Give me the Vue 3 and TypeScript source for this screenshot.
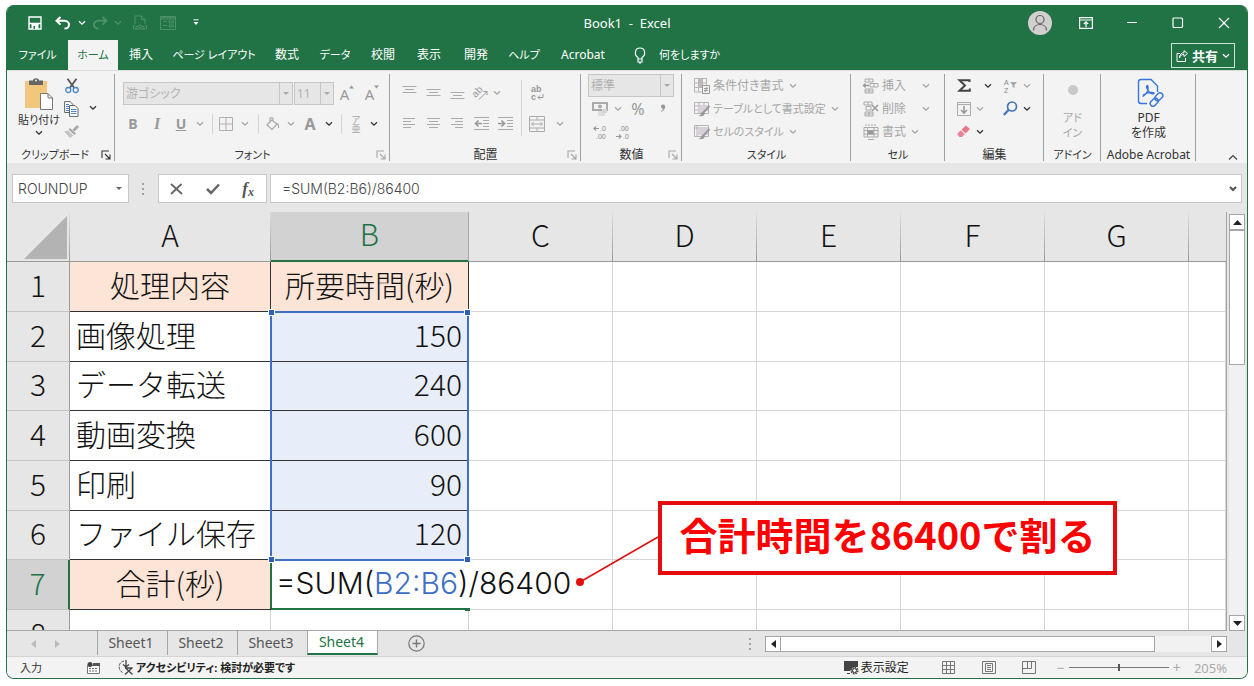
<script setup lang="ts">
import { h, ref } from 'vue'

interface Row {
  n: number
  label: string
  value: string
  head?: boolean
}

const tabs = [
  { name: 'ファイル', kana: true },
  { name: 'ホーム', kana: true },
  { name: '挿入', kana: false },
  { name: 'ページ レイアウト', kana: true },
  { name: '数式', kana: false },
  { name: 'データ', kana: true },
  { name: '校閲', kana: false },
  { name: '表示', kana: false },
  { name: '開発', kana: false },
  { name: 'ヘルプ', kana: true },
  { name: 'Acrobat', kana: false },
]
const activeTab = ref('ホーム')

const columns = ['A', 'B', 'C', 'D', 'E', 'F', 'G', '']
const rows: Row[] = [
  { n: 1, label: '処理内容', value: '所要時間(秒)', head: true },
  { n: 2, label: '画像処理', value: '150' },
  { n: 3, label: 'データ転送', value: '240' },
  { n: 4, label: '動画変換', value: '600' },
  { n: 5, label: '印刷', value: '90' },
  { n: 6, label: 'ファイル保存', value: '120' },
  { n: 7, label: '合計(秒)', value: '', head: true },
  { n: 8, label: '', value: '' },
]

const sheets = ['Sheet1', 'Sheet2', 'Sheet3', 'Sheet4']
const activeSheet = ref('Sheet4')
const cellName = ref('ROUNDUP')
const formula = ref('=SUM(B2:B6)/86400')
const zoom = ref(205)

const Chev = () =>
  h('svg', { width: 8, height: 6, viewBox: '0 0 8 6' }, [
    h('path', { d: 'M1 1.2 4 4.2 7 1.2', fill: 'none', stroke: 'currentColor', 'stroke-width': 1.3 }),
  ])

const Launcher = () =>
  h('svg', { width: 10, height: 10, viewBox: '0 0 10 10' }, [
    h('path', { d: 'M1 8V1H8M4 4 8.500 8.500M9 4.500V9H4.500', fill: 'none', stroke: 'currentColor', 'stroke-width': 1.100 }),
  ])
</script>

<template>
  <div class="window">
    <header class="title">
      <div class="quick">
        <button aria-label="上書き保存"><svg width="14" height="14" viewBox="0 0 14 14"><path d="M1 1H13V13H1Z M1 7.500H13" fill="none" stroke="#fff" stroke-width="1.400" /><path d="M3.500 7.500H10.500V13H3.500Z" fill="#fff" /><path d="M5.500 10H7V13H5.500Z" fill="#217346" /></svg></button>
        <button aria-label="元に戻す"><svg width="16" height="14" viewBox="0 0 16 14"><path d="M5.500 1 1.500 4.800 5.500 8.600M2 4.800H9.500C16 5 15 12.500 9.500 12.500" fill="none" stroke="#fff" stroke-width="2" /></svg></button>
        <button aria-label="元に戻す一覧"><Chev /></button>
        <button class="dim" disabled aria-label="やり直し"><svg width="16" height="14" viewBox="0 0 16 14"><path d="M10.500 1 14.500 4.800 10.500 8.600M14 4.800H6.500C0 5 1 12.500 6.500 12.500" fill="none" stroke="currentColor" stroke-width="2" /></svg></button>
        <button class="dim" disabled aria-label="やり直し一覧"><Chev /></button>
        <button class="dim" disabled aria-label="印刷プレビュー"><svg width="14" height="15" viewBox="0 0 14 15"><path d="M2 9V1H8.500L12 4.500V9M8.500 1V4.500H12M.5 10V14H13.500V10M3 11.500H5M9 11.500H11M3 14V11M11 14V11" fill="none" stroke="currentColor" /><circle cx="7" cy="11.500" r="1.500" fill="none" stroke="currentColor" /></svg></button>
        <button class="dim" disabled aria-label="フォーム"><svg width="16" height="14" viewBox="0 0 16 14"><path d="M.5.5H15.500V13.500H.5ZM.5 3H15.500M.5 1.800H15.500M3 5.500H7M3 9.500H7M9 5H13.500V7H9ZM9 9H13.500V11H9Z" fill="none" stroke="currentColor" /></svg></button>
        <button aria-label="クイック アクセスのカスタマイズ"><svg width="6" height="7" viewBox="0 0 6 7"><path d="M.5.8H5.500" stroke="#fff" /><path d="M.5 3H5.500L3 6Z" fill="#fff" /></svg></button>
      </div>
      <h1>Book1&nbsp; -&nbsp; Excel</h1>
      <div class="winctl">
        <button aria-label="アカウント"><svg width="24" height="24" viewBox="0 0 24 24"><circle cx="12" cy="12" r="12" fill="#d2d0ce" /><circle cx="12" cy="8.500" r="4" fill="none" stroke="#666" stroke-width="1.200" /><path d="M5.500 19.500C5.500 11.500 18.500 11.500 18.500 19.500" fill="none" stroke="#666" stroke-width="1.200" /></svg></button>
        <button aria-label="リボンの表示オプション"><svg width="14" height="12" viewBox="0 0 14 12"><path d="M.6.6H13.400V11.400H.6ZM.6 3H13.400M7 10V5M4.800 7 7 4.800 9.200 7" fill="none" stroke="#fff" stroke-width="1.200" /></svg></button>
        <button aria-label="最小化"><svg width="12" height="12" viewBox="0 0 12 12"><path d="M1 5.500H11" stroke="#fff" /></svg></button>
        <button aria-label="最大化"><svg width="12" height="12" viewBox="0 0 12 12"><rect x="1" y="1" width="9.500" height="9.500" rx="1" fill="none" stroke="#fff" stroke-width="1.200" /></svg></button>
        <button aria-label="閉じる"><svg width="12" height="12" viewBox="0 0 12 12"><path d="M1 1 11 11M11 1 1 11" stroke="#fff" stroke-width="1.200" /></svg></button>
      </div>
    </header>

    <nav class="tabs">
      <button v-for="t in tabs" :key="t.name" :class="{ on: t.name === activeTab, kana: t.kana }" @click="activeTab = t.name">{{ t.name }}</button>
      <button class="tell kana">
        <svg width="12" height="17" viewBox="0 0 12 17"><path d="M4 12V10.500C0 8 .5 1 6 1S12 8 8 10.500V12ZM4 12V15H8V12M5 16H7" fill="none" stroke="#fff" stroke-width="1.200" /></svg>
        何をしますか
      </button>
      <button class="share">
        <svg width="12" height="12" viewBox="0 0 12 12"><path d="M4 3.500H1V11.500H9.500V8M3.500 8C4 5 6 4.500 8 4.500V6.500L11.500 3.500 8 .7V2.700C5.500 2.700 3.500 4.500 3.500 8Z" fill="none" stroke="#fff" /></svg>
        <b>共有</b><Chev />
      </button>
    </nav>

    <section class="ribbon">
      <div class="group clip">
        <div class="body">
          <button class="paste">
            <svg width="30" height="32" viewBox="0 0 30 32"><path d="M1 3H23V30H1Z" fill="#f0c77c" /><path d="M5 2.500H9C9-.5 15-.5 15 2.500H19V7H5Z" fill="#666" /><circle cx="12" cy="2.500" r="1" fill="#eee" /><path d="M16.500 15.500H24L28.500 20V31.500H16.500ZM24 15.500V20H28.500" fill="#fff" stroke="#777" /></svg>
            <span class="kana">貼り付け</span>
            <Chev />
          </button>
          <div class="clipcol">
            <button aria-label="切り取り"><svg width="14" height="16" viewBox="0 0 14 16"><path d="M2.500.8 9.300 10M11.500.8 4.700 10" stroke="#555" stroke-width="1.800" /><circle cx="3.300" cy="12" r="2.500" fill="none" stroke="#4a86c5" stroke-width="1.300" /><circle cx="10.700" cy="12" r="2.500" fill="none" stroke="#4a86c5" stroke-width="1.300" /></svg></button>
            <button aria-label="コピー"><svg width="15" height="16" viewBox="0 0 15 16"><path d="M.6.6H6L9 3.500V11.500H.6Z" fill="#fff" stroke="#666" /><path d="M2 3.500H5M2 5.500H5M2 7.500H5M2 9.500H5" stroke="#4a86c5" /><path d="M5.500 4.500H11L14 7.500V15.400H5.500Z" fill="#fff" stroke="#666" /><path d="M7 8.500H12.500M7 10.500H12.500M7 12.500H12.500" stroke="#4a86c5" /></svg></button>
            <button disabled aria-label="書式のコピー"><svg width="15" height="13" viewBox="0 0 15 13"><path d="M13 0 15 2 10.500 6.500 8.500 4.500ZM6 3 12 8.500 10.500 10 4.500 4.500Z" fill="#a9a9a9" /><path d="M0 6.500 4 5.500 9.500 10.500 6 13Z" fill="#c9c5c5" /></svg></button>
          </div>
          <button class="copymore" aria-label="コピー オプション"><Chev /></button>
        </div>
        <footer><span class="kana">クリップボード</span><Launcher /></footer>
      </div>

      <div class="group font off">
        <div class="body">
          <div class="fontrow">
            <span class="combo"><select disabled aria-label="フォント"><option>游ゴシック</option></select><i></i></span>
            <span class="combo"><select disabled aria-label="フォント サイズ"><option>11</option></select><i></i></span>
            <button disabled aria-label="フォント サイズの拡大" class="grow">A<svg width="5" height="4" viewBox="0 0 5 4"><path d="M0 3.500 2.500 .5 5 3.500Z" fill="currentColor" /></svg></button>
            <button disabled aria-label="フォント サイズの縮小" class="grow">A<svg width="5" height="4" viewBox="0 0 5 4"><path d="M0 .5H5L2.500 3.500Z" fill="currentColor" /></svg></button>
          </div>
          <div class="fmtrow">
            <button disabled><b>B</b></button>
            <button disabled><b class="it">I</b></button>
            <button disabled><b class="ul">U</b></button>
            <Chev />
            <span class="vr"></span>
            <button disabled aria-label="罫線"><svg width="14" height="14" viewBox="0 0 14 14"><path d="M.5.5H13.500V13.500H.5ZM7 .5V13.500M.5 7H13.500" fill="none" stroke="#b3adad" /></svg></button>
            <Chev />
            <span class="vr"></span>
            <button disabled aria-label="塗りつぶし"><svg width="14" height="14" viewBox="0 0 14 14"><path d="M5.500 3 11 7 6 12.500 1 8ZM4 6V1.500C4 .5 7 .5 7 1.500V5M10.500 6C12.500 7 13 8 12.500 11" fill="none" stroke="#aaa" stroke-width="1.200" /></svg></button>
            <Chev />
            <button disabled class="bigA"><b>A</b></button>
            <Chev class="dark" />
            <span class="vr"></span>
            <button disabled class="ruby"><span>ア</span><span>亜</span></button>
            <Chev class="dark" />
          </div>
        </div>
        <footer><span class="kana">フォント</span><Launcher /></footer>
      </div>

      <div class="group align off">
        <div class="body">
          <div class="algrid">
            <button disabled aria-label="上揃え"><svg width="15" height="17" viewBox="0 0 15 17"><path d="M.5 2.500H14.500M3 5.500H12M.5 8.500H14.500" stroke="#aaa" /></svg></button>
            <button disabled aria-label="上下中央揃え"><svg width="15" height="17" viewBox="0 0 15 17"><path d="M.5 5.500H14.500M3 8.500H12M.5 11.500H14.500" stroke="#aaa" /></svg></button>
            <button disabled aria-label="下揃え"><svg width="15" height="17" viewBox="0 0 15 17"><path d="M.5 8.500H14.500M3 11.500H12M.5 14.500H14.500" stroke="#aaa" /></svg></button>
            <button disabled aria-label="方向"><svg width="16" height="16" viewBox="0 0 16 16"><text x="0" y="9" transform="rotate(-45 6 8)" font-size="10" fill="#999">ab</text><path d="M6 14.500 14 6.500M14 10V6.500H10.500" fill="none" stroke="#999" /></svg></button>
            <Chev class="near" />
            <button disabled aria-label="左揃え"><svg width="12" height="11" viewBox="0 0 12 11"><path d="M0 .5H12M0 3.500H8M0 6.500H12M0 9.500H8" stroke="#aaa" /></svg></button>
            <button disabled aria-label="中央揃え"><svg width="13" height="11" viewBox="0 0 13 11"><path d="M0 .5H13M2 3.500H11M0 6.500H13M2 9.500H11" stroke="#aaa" /></svg></button>
            <button disabled aria-label="右揃え"><svg width="12" height="11" viewBox="0 0 12 11"><path d="M0 .5H12M4 3.500H12M0 6.500H12M4 9.500H12" stroke="#aaa" /></svg></button>
            <button disabled aria-label="インデントを減らす"><svg width="15" height="13" viewBox="0 0 15 13"><path d="M0 .5H15M9 3.500H15M9 6.500H15M9 9.500H15M0 12.500H15" stroke="#aaa" /><path d="M8 6.500H1.500M4.500 3.500 1.500 6.500 4.500 9.500" fill="none" stroke="#999" stroke-width="1.600" /></svg></button>
            <button disabled aria-label="インデントを増やす"><svg width="15" height="13" viewBox="0 0 15 13"><path d="M0 .5H15M9 3.500H15M9 6.500H15M9 9.500H15M0 12.500H15" stroke="#aaa" /><path d="M0 6.500H6.500M3.500 3.500 6.500 6.500 3.500 9.500" fill="none" stroke="#999" stroke-width="1.600" /></svg></button>
          </div>
          <span class="vr tall"></span>
          <div class="wrapgrid">
            <button disabled aria-label="折り返して全体を表示する"><svg width="14" height="18" viewBox="0 0 14 18"><text x="1" y="8" font-size="9" font-weight="700" fill="#999">ab</text><text x="1" y="16" font-size="9" font-weight="700" fill="#999">c</text><path d="M13 10V13.500H8M10 11.500 8 13.500 10 15.500" fill="none" stroke="#999" /></svg></button>
            <span></span>
            <button disabled aria-label="セルを結合して中央揃え"><svg width="16" height="16" viewBox="0 0 16 16"><path d="M.5.5H15.500V15.500H.5ZM.5 4H15.500M.5 12H15.500M8 .5V4M8 12V15.500M2.500 8H13.500M4.500 6 2.500 8 4.500 10M11.500 6 13.500 8 11.500 10" fill="none" stroke="#aaa" /></svg></button>
            <Chev />
          </div>
        </div>
        <footer><span>配置</span><Launcher /></footer>
      </div>

      <div class="group number off">
        <div class="body">
          <span class="combo"><select disabled aria-label="表示形式"><option>標準</option></select><i></i></span>
          <div class="numrow">
            <button disabled aria-label="通貨表示形式"><svg width="16" height="14" viewBox="0 0 16 14"><path d="M1 1H15V8H1Z" fill="none" stroke="#aaa" stroke-width="2" /><circle cx="8" cy="4.500" r="2" fill="#aaa" /><path d="M6 9H13V14H6Z" fill="#ddd" /><path d="M10 7H15V11H10Z" fill="#d4d4d4" /></svg></button>
            <Chev />
            <button disabled class="pct">%</button>
            <button disabled aria-label="桁区切りスタイル"><svg width="6" height="9" viewBox="0 0 6 9"><path d="M3 .5C6 .5 6.500 5 1.500 8L1 7.300C2.500 6.300 3 5.500 3 4.700 .3 4.700 .3 .5 3 .5Z" fill="#999" /></svg></button>
          </div>
          <div class="numrow">
            <button disabled aria-label="小数点以下の表示桁数を増やす"><svg width="14" height="16" viewBox="0 0 14 16"><text x="7" y="7" font-size="7" fill="#888">.0</text><text x="3" y="15" font-size="7" fill="#888">.00</text><path d="M6 4.500H1M3 2.500 1 4.500 3 6.500" fill="none" stroke="#999" stroke-width="1.200" /></svg></button>
            <span class="dec"><button disabled aria-label="小数点以下の表示桁数を減らす"><svg width="14" height="16" viewBox="0 0 14 16"><text x="3" y="7" font-size="7" fill="#888">.00</text><text x="7" y="15" font-size="7" fill="#888">.0</text><path d="M0 12.500H5M3 10.500 5 12.500 3 14.500" fill="none" stroke="#999" stroke-width="1.200" /></svg></button></span>
          </div>
        </div>
        <footer><span>数値</span><Launcher /></footer>
      </div>

      <div class="group styles off">
        <div class="body">
          <button disabled class="line"><svg width="16" height="16" viewBox="0 0 16 16"><path d="M.5.5H12.500V14H.5ZM.5 5H12.500M.5 9.500H12.500M4.500.5V14M8.500.5V14" fill="none" stroke="#b5b5b5" /><path d="M4.500.5H8.500V9.500H4.500Z" fill="#c0b8bc" /><path d="M8.500 7.500H15.500V15.500H8.500Z" fill="#f3f3f3" stroke="#999" /><path d="M10 10.500H14M10 12.500H14M13 9 11 14" stroke="#999" /></svg><span>条件付き書式</span><Chev /></button>
          <button disabled class="line kana"><svg width="16" height="16" viewBox="0 0 16 16"><path d="M.5 1.500H14.500V12.500H.5ZM.5 5H14.500M.5 9H14.500M5 1.500V12.500M10 1.500V12.500" fill="none" stroke="#b5b5b5" /><path d="M5 5H14V9H9V12H5Z" fill="#d9d0da" /><path d="M15.500 5 9 12" stroke="#999" stroke-width="2" /><path d="M9 11C6 11 8 14 4.500 15 9 16 11 14 10.500 12Z" fill="#999" /></svg><span>テーブルとして書式設定</span><Chev /></button>
          <button disabled class="line kana"><svg width="16" height="16" viewBox="0 0 16 16"><path d="M.5 1.500H14.500V12.500H.5ZM.5 4H14.500M3 1.500V12.500" fill="none" stroke="#b5b5b5" /><path d="M4 5H14V11H4Z" fill="#d9d0da" /><path d="M15.500 5 9 12" stroke="#999" stroke-width="2" /><path d="M9 11C6 11 8 14 4.500 15 9 16 11 14 10.500 12Z" fill="#999" /></svg><span>セルのスタイル</span><Chev /></button>
        </div>
        <footer><span class="kana">スタイル</span></footer>
      </div>

      <div class="group cells off">
        <div class="body">
          <button disabled class="line wide"><svg width="16" height="16" viewBox="0 0 16 16"><path d="M2 1H10V4H2ZM6 1V4M2 11H10V15H2ZM6 11V15M2 13H10M7 5.500H15V9H7ZM11 5.500V9" fill="none" stroke="#aaa" /><path d="M6 7.500H0M2.500 5.500 .5 7.500 2.500 9.500" fill="none" stroke="#999" stroke-width="1.300" /></svg><span>挿入</span><Chev /></button>
          <button disabled class="line wide"><svg width="16" height="16" viewBox="0 0 16 16"><path d="M1 1H9V4H1ZM5 1V4M3 5.500H8V9H3ZM2 11H10V15H2ZM6 11V15M2 13H10" fill="none" stroke="#aaa" /><path d="M9 4 15 10M15 4 9 10" stroke="#999" stroke-width="1.500" /></svg><span>削除</span><Chev /></button>
          <button disabled class="line"><svg width="16" height="16" viewBox="0 0 16 16"><path d="M1 3.500H15V13H1ZM4.500 3.500V13M11 3.500V13M1 6.500H15M1 10H15M5 15.500H11" fill="none" stroke="#aaa" /><path d="M2 1H14" stroke="#aaa" stroke-dasharray="2 1" /><path d="M5 6.500H10.500V10.500H5Z" fill="#999" /></svg><span>書式</span><Chev /></button>
        </div>
        <footer><span class="kana">セル</span></footer>
      </div>

      <div class="group editing">
        <div class="body">
          <button aria-label="オート SUM"><svg width="13" height="13" viewBox="0 0 13 13"><path d="M11.500 3V1.200H1.500L7 6.500 1.500 11.800H11.800V9.500" fill="none" stroke="#444" stroke-width="2" /></svg></button>
          <Chev class="dark c2" />
          <button disabled aria-label="並べ替えとフィルター"><svg width="15" height="16" viewBox="0 0 15 16"><text x="1" y="7" font-size="7" fill="#888">A</text><text x="1" y="15" font-size="7" fill="#888">Z</text><path d="M7 4H14L11.500 7V10L9.500 9V7Z" fill="#aaa" /></svg></button>
          <Chev />
          <button disabled aria-label="フィル"><svg width="14" height="14" viewBox="0 0 14 14"><path d="M.5.5H13.500V13.500H.5ZM.5 2.500H13.500" fill="none" stroke="#aaa" /><path d="M7 4V11M4 8 7 11 10 8" fill="none" stroke="#999" stroke-width="1.600" /></svg></button>
          <Chev />
          <button aria-label="検索と選択"><svg width="15" height="15" viewBox="0 0 15 15"><circle cx="9" cy="5.500" r="4.500" fill="none" stroke="#3f77b8" stroke-width="1.700" /><path d="M5.500 9 .8 14" stroke="#3f77b8" stroke-width="2.200" /></svg></button>
          <Chev class="dark" />
          <button aria-label="クリア"><svg width="14" height="13" viewBox="0 0 14 13"><path d="M9 .5 13 4 8.500 8.500 4.500 4.500Z" fill="#e8788c" /><path d="M3.800 5.300 7.800 9.300 5 12H2.500L.5 9.500V8.500Z" fill="#ea8497" /></svg></button>
          <Chev class="dark" />
        </div>
        <footer><span>編集</span></footer>
      </div>

      <div class="group addin off">
        <div class="body">
          <button disabled class="big kana"><svg width="28" height="36" viewBox="0 0 28 36"><circle cx="14" cy="16" r="5" fill="#c8c8c8" /></svg><span>アド</span><span>イン</span></button>
        </div>
        <footer><span class="kana">アドイン</span></footer>
      </div>

      <div class="group acro">
        <div class="body">
          <button class="big"><svg width="28" height="36" viewBox="0 0 28 36"><g fill="none" stroke="#3b74dc" stroke-width="1.400"><path d="M12 29.500H6C4.500 29.500 3.500 28.500 3.500 27V8C3.500 6.500 4.500 5.500 6 5.500H16L22.500 12V18M7.500 22.500C11 21 14 16 13 12.500 12.300 10.500 10.800 12 12 14.500 13.500 18 16 20.500 19 19.500 19.500 18 14 17.500 8 21" /><rect x="19.500" y="20" width="9" height="5.500" rx="2.700" transform="rotate(-45 24 23)" /><rect x="14.500" y="25.500" width="9" height="5.500" rx="2.700" transform="rotate(-45 19 28)" /></g></svg><span>PDF</span><span>を作成</span></button>
        </div>
        <footer><span>Adobe Acrobat</span></footer>
      </div>
      <button class="collapse" aria-label="リボンを折りたたむ"><svg width="10" height="7" viewBox="0 0 10 7"><path d="M1 5.500 5 1.500 9 5.500" fill="none" stroke="#444" stroke-width="1.200" /></svg></button>
    </section>

    <section class="fbar">
      <label class="namebox"><input v-model="cellName" aria-label="名前ボックス" /><i class="tri"></i></label>
      <span class="dots"><i></i><i></i><i></i></span>
      <div class="fbtns">
        <button aria-label="キャンセル"><svg width="13" height="12" viewBox="0 0 13 12"><path d="M1 1 12 11M11.500 1 1 11" stroke="#666" stroke-width="1.800" /></svg></button>
        <button aria-label="入力"><svg width="14" height="12" viewBox="0 0 14 12"><path d="M1 6 5 10 13 1.500" fill="none" stroke="#666" stroke-width="2.500" /></svg></button>
        <button class="fx" aria-label="関数の挿入">f<small>x</small></button>
      </div>
      <label class="formula"><input v-model="formula" aria-label="数式バー" /><svg width="8" height="6" viewBox="0 0 8 6"><path d="M1 1 4 4 7 1" fill="none" stroke="#555" stroke-width="2" /></svg></label>
    </section>

    <main class="area">
      <div class="sheet">
        <table>
          <colgroup><col class="wr" /><col class="wa" /><col class="wb" /><col v-for="i in 5" :key="i" class="wc" /><col /></colgroup>
          <thead>
            <tr>
              <th class="corner"><svg width="43" height="43" viewBox="0 0 43 43"><path d="M43 0V43H0Z" fill="#b3b3b3" /></svg></th>
              <th v-for="c in columns" :key="c" :class="{ sel: c === 'B' }">{{ c }}</th>
            </tr>
          </thead>
          <tbody>
            <tr v-for="r in rows" :key="r.n">
              <th :class="{ sel: r.n === 7 }">{{ r.n }}</th>
              <td :class="{ boxed: r.n < 8, head: r.head }">{{ r.label }}</td>
              <td :class="{ boxed: r.n < 7, head: r.n === 1, num: r.n > 1 && r.n < 7, edit: r.n === 7 }">
                {{ r.value }}
                <span v-if="r.n === 2" class="range"><i></i><i></i><i></i><i></i></span>
                <div v-if="r.n === 7" class="editor" role="textbox" aria-label="B7" contenteditable="true">=SUM(<span class="refr">B2:B6</span>)/86400</div>
                <i v-if="r.n === 7" class="handle"></i>
              </td>
              <td v-for="i in 6" :key="i"></td>
            </tr>
          </tbody>
        </table>
        <svg class="leader" width="90" height="60" viewBox="0 0 90 60"><path d="M10 50 88 5" stroke="#e01010" stroke-width="1.500" /><circle cx="10" cy="50" r="4" fill="#e01010" /></svg>
        <div class="callout">合計時間を86400で割る</div>
      </div>
      <div class="vscroll">
        <button aria-label="上へ"><svg width="9" height="5" viewBox="0 0 9 5"><path d="M0 5 4.500 0 9 5Z" fill="#222" /></svg></button>
        <div class="vtrack"><div class="vthumb"></div></div>
        <button aria-label="下へ"><svg width="9" height="5" viewBox="0 0 9 5"><path d="M0 0H9L4.500 5Z" fill="#222" /></svg></button>
      </div>
    </main>

    <section class="sheetbar">
      <div class="nav">
        <button disabled aria-label="前のシート"><svg width="5" height="8" viewBox="0 0 5 8"><path d="M5 0V8L0 4Z" fill="#bbb" /></svg></button>
        <button disabled aria-label="次のシート"><svg width="5" height="8" viewBox="0 0 5 8"><path d="M0 0V8L5 4Z" fill="#bbb" /></svg></button>
      </div>
      <button v-for="s in sheets" :key="s" class="stab" :class="{ on: s === activeSheet }" @click="activeSheet = s">{{ s }}</button>
      <button class="add" aria-label="新しいシート"><svg width="17" height="17" viewBox="0 0 17 17"><circle cx="8.500" cy="8.500" r="7.700" fill="none" stroke="#777" stroke-width="1.200" /><path d="M8.500 4.500V12.500M4.500 8.500H12.500" stroke="#777" stroke-width="1.400" /></svg></button>
      <span class="dots"><i></i><i></i><i></i></span>
      <div class="hscroll">
        <button aria-label="左へ"><svg width="5" height="8" viewBox="0 0 5 8"><path d="M5 0V8L0 4Z" fill="#222" /></svg></button>
        <div class="htrack"><div class="hthumb"></div></div>
        <button aria-label="右へ"><svg width="5" height="8" viewBox="0 0 5 8"><path d="M0 0V8L5 4Z" fill="#222" /></svg></button>
      </div>
    </section>

    <footer class="status">
      <span class="mode">入力</span>
      <svg class="macro" width="13" height="12" viewBox="0 0 13 12"><path d="M.5 3.500H12.500V11.500H.5Z" fill="#fff" stroke="#777" /><path d="M2 6.500H11M2 9H11" stroke="#666" stroke-dasharray="2 1" /><circle cx="3" cy="2.500" r="2.500" fill="#444" /><path d="M6 1H13V4H6Z" fill="#555" /></svg>
      <button class="acc"><svg width="16" height="15" viewBox="0 0 16 15"><path d="M6 1C-.5 2 0 11.500 5 12.500" fill="none" stroke="#555" stroke-dasharray="3 1" /><path d="M8 0V7M5 4.500 8 7 11 4.500M7 7.500 14.500 14.500M14.500 7.500 7 14.500M8 8H14" fill="none" stroke="#444" stroke-width="1.300" /></svg><b>アクセシビリティ: 検討が必要です</b></button>
      <button class="disp"><svg width="15" height="15" viewBox="0 0 15 15"><path d="M0 1H14V7H9L6 11H0Z" fill="#444" /><path d="M3 13.500H6" stroke="#444" /><circle cx="10.500" cy="10.500" r="3" fill="#f3f3f3" stroke="#444" stroke-width="2" stroke-dasharray="1.500 .8" /><circle cx="10.500" cy="10.500" r="2" fill="none" stroke="#444" /></svg>表示設定</button>
      <div class="views">
        <button aria-label="標準"><svg width="13" height="13" viewBox="0 0 13 13"><path d="M.5.5H12.500V12.500H.5ZM.5 4.500H12.500M.5 8.500H12.500M4.500.5V12.500M8.500.5V12.500" fill="none" stroke="#777" /></svg></button>
        <button aria-label="ページ レイアウト"><svg width="14" height="13" viewBox="0 0 14 13"><path d="M.5.5H13.500V12.500H.5ZM3.500 2.500H10.500V10.500H3.500ZM5 4.500H9M5 6.500H9M5 8.500H9" fill="none" stroke="#777" /></svg></button>
        <button aria-label="改ページ プレビュー"><svg width="14" height="13" viewBox="0 0 14 13"><path d="M.5.5H13.500V12.500H.5ZM5.500 .5V7.500M9.500 .5V7.500H.5" fill="none" stroke="#777" /></svg></button>
      </div>
      <div class="zoomer">
        <button aria-label="縮小">−</button>
        <input v-model.number="zoom" type="range" min="10" max="400" aria-label="ズーム" />
        <button aria-label="拡大">+</button>
        <output>{{ zoom }}%</output>
      </div>
    </footer>
  </div>
</template>

<style>
body {
  background: #fff;
}
</style>

<style scoped>
* {
  box-sizing: border-box;
}
.window {
  display: flex;
  flex-direction: column;
  height: calc(100vh - 12px);
  min-height: 480px;
  margin: 5px 6px 0;
  border: 1px solid #217346;
  border-top: 0;
  border-radius: 8px;
  overflow: hidden;
  background: #e6e6e6;
  color: #333;
  font: 12px/16px 'Noto Sans', 'Noto Sans CJK JP', sans-serif;
  font-feature-settings: 'palt';
}
button {
  display: flex;
  align-items: center;
  justify-content: center;
  padding: 0;
  border: 0;
  background: none;
  color: inherit;
  font: inherit;
  font-feature-settings: inherit;
  white-space: nowrap;
}
svg {
  flex: none;
  display: block;
  overflow: visible;
  font-family: 'Liberation Sans', sans-serif;
}
.kana {
  font-size: 11px;
}
.dark {
  color: #333;
}

/* title bar */
.title {
  display: grid;
  grid-template-columns: 1fr auto 1fr;
  align-items: center;
  height: 35px;
  background: #217346;
  color: #fff;
}
.title h1 {
  margin: 0;
  font-size: 13px;
  font-weight: 400;
}
.quick {
  display: grid;
  grid-template-columns: 28px 28px 10px 26px 10px 34px 22px 34px;
  padding-left: 14px;
}
.dim {
  color: #4c9069;
}
.winctl {
  display: grid;
  grid-template-columns: repeat(5, 46px);
  justify-content: end;
}

/* ribbon tabs */
.tabs {
  display: grid;
  grid-template-columns: 61px 50px 46px 100px 46px 50px 46px 46px 48px 48px 70px 1fr auto;
  height: 30px;
  background: #217346;
  color: #fff;
}
.tabs .on {
  background: #f3f3f3;
  color: #217346;
}
.tabs .tell {
  justify-content: flex-start;
  gap: 13px;
  padding-left: 16px;
}
.tabs .share {
  gap: 4px;
  height: 25px;
  margin: 3px 12px 0 0;
  padding: 0 4px;
  border: 1px solid #cfe3d7;
  font-size: 13px;
}

/* ribbon */
.ribbon {
  display: flex;
  height: 93px;
  background: #f3f3f3;
  border-top: 1px solid #dcdcdc;
}
.group {
  position: relative;
  display: flex;
  flex-direction: column;
  flex: none;
  padding-top: 3px;
}
.group::after {
  content: '';
  position: absolute;
  right: 0;
  top: 3px;
  bottom: 2px;
  width: 1px;
  background: #a0a0a0;
}
.group .body {
  height: 73px;
}
.group footer {
  display: grid;
  grid-template-columns: 12px 1fr 12px;
  align-items: center;
  height: 16px;
  padding: 0 2px;
  white-space: nowrap;
}
.group footer span {
  grid-column: 2;
  justify-self: center;
}
.off .body,
.off footer svg {
  color: #a6a6a6;
}
.off .body .dark {
  color: #333;
}
.clip { width: 108px; }
.font { width: 275px; }
.align { width: 191px; }
.number { width: 101px; }
.styles { width: 169px; }
.cells { width: 94px; }
.editing { width: 99px; }
.addin { width: 57px; }
.acro { width: 95px; }
.group.acro footer,
.group.addin footer {
  grid-template-columns: 0 1fr 0;
}
.group.clip footer {
  grid-template-columns: 0 1fr 12px;
}

.clip .body {
  display: grid;
  grid-template-columns: 54px 14px 30px;
  padding-left: 3px;
}
.paste {
  flex-direction: column;
  justify-content: flex-start;
  gap: 2px;
  padding: 4px 0 0 4px;
}
.clipcol {
  display: grid;
  grid-template-rows: repeat(3, 23px);
}
.copymore {
  height: 67px;
}

.combo {
  position: relative;
  display: block;
  height: 23px;
}
.combo select {
  width: 100%;
  height: 100%;
  padding: 0 2px;
  border: 1px solid #c6c6c6;
  border-radius: 0;
  background: #e6e6e6;
  color: #b0b0b0;
  font: inherit;
  font-feature-settings: inherit;
  opacity: 1;
  appearance: none;
}
.combo i {
  position: absolute;
  right: 0;
  top: 0;
  bottom: 0;
  width: 14px;
  border-left: 1px solid #c6c6c6;
}
.combo i::after,
.tri {
  border: 3px solid transparent;
  border-top-color: #aaa;
  border-bottom: 0;
}
.combo i::after {
  content: '';
  position: absolute;
  left: 3px;
  top: 10px;
}
.fontrow {
  display: grid;
  grid-template-columns: 170px 40px 24px 24px;
  column-gap: 1px;
  padding: 8px 0 0 8px;
}
.grow {
  font-size: 15px;
  color: #999;
}
.grow svg {
  align-self: flex-start;
  margin-top: 3px;
}
.fmtrow {
  display: grid;
  grid-template-columns: 24px 24px 24px 14px 10px 18px 20px 6px 24px 12px 26px 12px 12px 18px 18px;
  align-items: center;
  justify-items: center;
  height: 22px;
  margin-top: 8px;
  padding-left: 6px;
}
.fmtrow b {
  font-size: 14px;
  color: #999;
}
.fmtrow .it {
  font-family: 'Liberation Serif', serif;
  font-size: 16px;
  font-style: italic;
}
.fmtrow .ul {
  text-decoration: underline;
}
.fmtrow .bigA b {
  font-size: 16px;
}
.ruby {
  flex-direction: column;
  font-size: 9px;
  line-height: 9px;
}
.vr {
  width: 1px;
  height: 20px;
  background: #d4d4d4;
}
.vr.tall {
  height: 56px;
  margin-top: 6px;
}
.align .body {
  display: flex;
  padding-left: 7px;
}
.algrid {
  display: grid;
  grid-template-columns: repeat(5, 24px);
  grid-template-rows: 37px 25px;
  align-items: center;
  justify-items: center;
}
.algrid .near {
  justify-self: start;
}
.align .vr {
  margin-left: 4px;
}
.wrapgrid {
  display: grid;
  grid-template-columns: 30px 16px;
  grid-template-rows: 37px 25px;
  align-items: center;
  justify-items: center;
}
.number .combo {
  width: 86px;
}
.number .body {
  padding-left: 7px;
}
.numrow {
  display: grid;
  grid-template-columns: 24px 12px 28px 22px;
  align-items: center;
  justify-items: center;
  height: 23px;
}
.numrow .dec {
  grid-column: 2 / 4;
  justify-self: start;
  padding-left: 4px;
}
.pct {
  font-size: 16px;
  color: #999;
}
.line {
  gap: 3px;
  height: 23px;
}
.line svg:last-child {
  margin-left: 2px;
}
.line.wide svg:last-child {
  margin-left: 13px;
}
.styles .body,
.cells .body {
  padding-left: 12px;
}
.editing .body {
  display: grid;
  grid-template-columns: 24px 16px 30px 10px;
  grid-template-rows: repeat(3, 23px);
  align-items: center;
  justify-items: center;
  padding-left: 7px;
}
.editing .body > button:nth-child(4n + 3) {
  padding-left: 6px;
}
.editing .body > svg {
  color: #aaa;
}
.editing .body > svg:nth-child(6),
.editing .body > svg:nth-child(10) {
  justify-self: start;
}
.editing .body > svg.dark {
  color: #333;
}
.editing .body > .c2 {
  justify-self: end;
}
.big {
  flex-direction: column;
  width: 100%;
}
.big span {
  line-height: 15px;
}
.collapse {
  align-self: flex-end;
  margin: 0 9px 2px auto;
}

/* formula bar */
.fbar {
  display: flex;
  align-items: center;
  height: 49px;
  padding: 2px 5px 0 5px;
  font-family: Inter, sans-serif;
  font-weight: 300;
}
.namebox,
.fbtns,
.formula {
  display: flex;
  align-items: center;
  height: 29px;
  border: 1px solid #c8c8c8;
  background: #fff;
}
.fbar input {
  flex: 1;
  min-width: 0;
  padding: 0;
  border: 0;
  outline: 0;
  background: none;
  color: #444;
  font: inherit;
  font-size: 14px;
}
.namebox {
  width: 117px;
  padding: 0 6px 0 5px;
}
.tri {
  border-top-color: #666;
}
.dots {
  display: grid;
  gap: 3px;
}
.dots i {
  width: 2px;
  height: 2px;
  background: #a0a0a0;
}
.fbar .dots {
  margin: 0 14px 0 13px;
}
.fbtns {
  width: 109px;
  margin-right: 3px;
}
.fbtns button {
  flex: 1;
}
.fbtns .fx {
  font: italic bold 17px/20px 'Liberation Serif', serif;
  color: #555;
}
.fx small {
  align-self: flex-end;
  font-size: 12px;
  line-height: 14px;
}
.formula {
  flex: 1;
  padding: 0 4px 0 11px;
}

/* grid */
.area {
  display: flex;
  flex: 1;
  min-height: 0;
}
.sheet {
  position: relative;
  flex: 1;
  min-width: 0;
  overflow: hidden;
  border-right: 1px solid #a6a6a6;
  border-bottom: 1px solid #a6a6a6;
  font-family: 'Noto Sans CJK JP', sans-serif;
  font-feature-settings: normal;
}
table {
  width: 100%;
  border-spacing: 0;
  table-layout: fixed;
  font-size: 30px;
  font-weight: 300;
  line-height: 40px;
  color: #111;
  white-space: nowrap;
}
.wr { width: 63px; }
.wa { width: 201px; }
.wb { width: 198px; }
.wc { width: 144px; }
tr {
  height: 50px;
}
tbody tr:nth-child(3n) {
  height: 49px;
}
th,
td {
  padding: 0 6px 6px;
  font-weight: 300;
  background: #fff;
  border-right: 1px solid #d6d6d6;
  border-bottom: 1px solid #d6d6d6;
}
th {
  padding: 0 0 6px;
  background: #e6e6e6;
  border-color: #c4c4c4;
}
thead th {
  border-bottom-color: #999;
  border-image: linear-gradient(#e0e0e0, #999) 1;
}
tbody th {
  border-right-color: #999;
}
thead th:last-child {
  border-right: 0;
}
thead .corner {
  padding: 2px 2px 0 0;
}
.corner svg {
  margin-left: auto;
}
thead .sel {
  background: #d2d2d2;
  color: #217346;
  border-image: none;
  border-right-color: #aaa;
  border-bottom: 2px solid #217346;
}
tbody .sel {
  background: #d2d2d2;
  color: #217346;
  border-right: 2px solid #217346;
}
.boxed {
  border-color: #333;
}
.head {
  background: #fce4d6;
  text-align: center;
}
.num {
  position: relative;
  background: #e8eef9;
  text-align: right;
}
.range {
  position: absolute;
  left: -1px;
  top: -1px;
  width: 199px;
  height: 250px;
  border: 2px solid #3f6fc4;
  z-index: 1;
}
.range i {
  position: absolute;
  width: 5px;
  height: 5px;
  background: #2f60b8;
  outline: 1px solid #fff;
}
.range i:nth-child(1) { left: -3px; top: -3px; }
.range i:nth-child(2) { right: -3px; top: -3px; }
.range i:nth-child(3) { left: -3px; bottom: -3px; }
.range i:nth-child(4) { right: -3px; bottom: -3px; }
.edit {
  position: relative;
}
td.edit {
  border-bottom: 2px solid #217346;
}
.editor {
  position: absolute;
  left: -1px;
  top: 0;
  bottom: 0;
  padding: 3px 2px 0 4px;
  border-left: 2px solid #217346;
  background: #fff;
  outline: 0;
  font-family: Inter, sans-serif;
}
.editor::before {
  content: '';
  position: absolute;
  left: 0;
  top: -1px;
  width: 198px;
  height: 1px;
  background: #217346;
}
.handle {
  position: absolute;
  right: -2px;
  bottom: -3px;
  width: 5px;
  height: 3px;
  background: #217346;
}
.refr {
  color: #3f6fc4;
}
.leader {
  position: absolute;
  left: 563px;
  top: 320px;
}
.callout {
  position: absolute;
  left: 651px;
  top: 289px;
  width: 459px;
  height: 74px;
  border: 4px solid #e60c0c;
  background: #fff;
  color: #f00;
  font-size: 38px;
  font-weight: 700;
  line-height: 58px;
  text-align: center;
  white-space: nowrap;
}
.vscroll {
  display: flex;
  flex-direction: column;
  flex: none;
  width: 20px;
  padding: 2px 2px 0 2px;
}
.vscroll button,
.hscroll button {
  flex: none;
  width: 16px;
  height: 16px;
  border: 1px solid #a6a6a6;
  background: #fff;
}
.vtrack {
  flex: 1;
  background: #f1f1f1;
}
.vthumb {
  height: 35%;
  border: 1px solid #a6a6a6;
  background: #fff;
}

/* sheet tabs */
.sheetbar {
  display: flex;
  height: 26px;
  border-bottom: 1px solid #d4d4d4;
  color: #555;
}
.nav {
  display: grid;
  grid-template-columns: 24px 24px;
  width: 90px;
  padding-left: 14px;
}
.stab {
  width: 70px;
  height: 24px;
  padding-right: 3px;
  font-size: 14px;
  border-left: 1px solid #a6a6a6;
}
.stab.on {
  width: 71px;
  padding-right: 2px;
  background: #fff;
  color: #217346;
  border-right: 1px solid #a6a6a6;
  border-bottom: 2px solid #217346;
}
.add {
  margin-left: 30px;
}
.sheetbar .dots {
  align-content: center;
  margin: 0 14px 0 auto;
}
.hscroll {
  display: flex;
  align-items: center;
  width: calc(37% + 3px);
  margin-right: 20px;
}
.htrack {
  flex: 1;
  height: 16px;
  background: #f1f1f1;
}
.hthumb {
  width: 87%;
  height: 100%;
  border: 1px solid #a6a6a6;
  border-left: 0;
  background: #fff;
}

/* status bar */
.status {
  display: flex;
  align-items: center;
  height: 21px;
  padding: 0 20px 0 13px;
  background: #f3f3f3;
  font-size: 11px;
}
.macro {
  margin: 0 18px 0 45px;
}
.acc {
  gap: 2px;
  color: #222;
}
.disp {
  gap: 2px;
  margin-left: auto;
  font-size: 12px;
  color: #222;
}
.views {
  display: grid;
  grid-template-columns: repeat(3, 40px);
  margin: 0 4px 0 20px;
}
.zoomer {
  display: grid;
  grid-template-columns: 16px 100px 16px auto;
  align-items: center;
  color: #aaa;
}
.zoomer button {
  font-size: 14px;
}
.zoomer output {
  margin-left: 9px;
  font-size: 13px;
}
.zoomer input {
  width: 100%;
  height: 12px;
  margin: 0;
  appearance: none;
  background: linear-gradient(#777, #777) center / 100% 1px no-repeat;
}
.zoomer input::-webkit-slider-thumb {
  appearance: none;
  width: 2px;
  height: 7px;
  background: #555;
}
</style>
